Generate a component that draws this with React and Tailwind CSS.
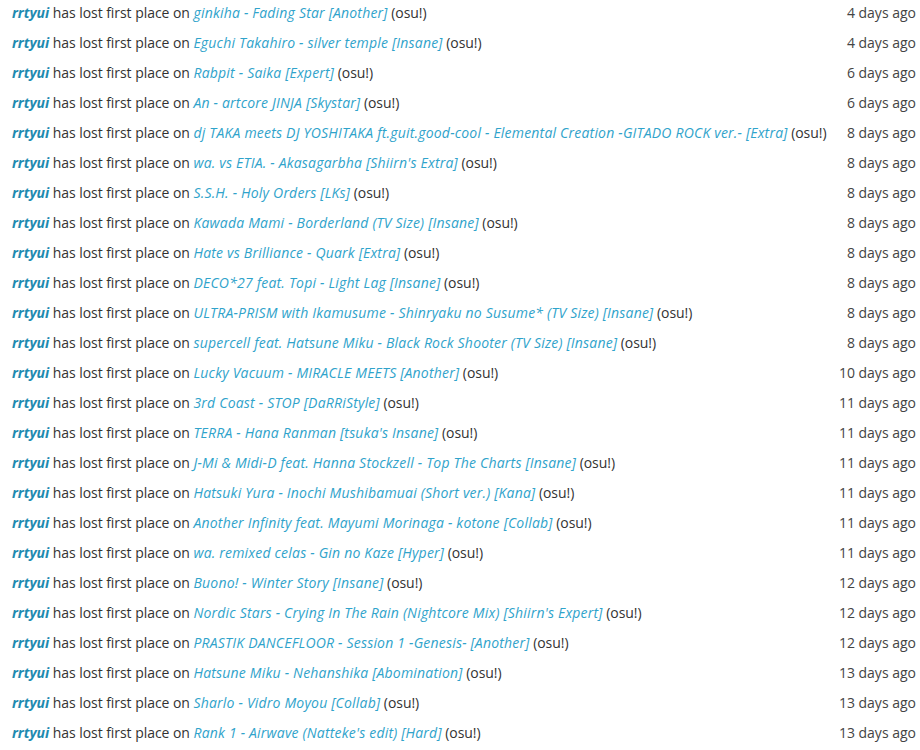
import React from "react";

const rows = [
  ["ginkiha - Fading Star [Another]", "4 days ago"],
  ["Eguchi Takahiro - silver temple [Insane]", "4 days ago"],
  ["Rabpit - Saika [Expert]", "6 days ago"],
  ["An - artcore JINJA [Skystar]", "6 days ago"],
  ["dj TAKA meets DJ YOSHITAKA ft.guit.good-cool - Elemental Creation -GITADO ROCK ver.- [Extra]", "8 days ago"],
  ["wa. vs ETIA. - Akasagarbha [Shiirn's Extra]", "8 days ago"],
  ["S.S.H. - Holy Orders [LKs]", "8 days ago"],
  ["Kawada Mami - Borderland (TV Size) [Insane]", "8 days ago"],
  ["Hate vs Brilliance - Quark [Extra]", "8 days ago"],
  ["DECO*27 feat. Topi - Light Lag [Insane]", "8 days ago"],
  ["ULTRA-PRISM with Ikamusume - Shinryaku no Susume* (TV Size) [Insane]", "8 days ago"],
  ["supercell feat. Hatsune Miku - Black Rock Shooter (TV Size) [Insane]", "8 days ago"],
  ["Lucky Vacuum - MIRACLE MEETS [Another]", "10 days ago"],
  ["3rd Coast - STOP [DaRRiStyle]", "11 days ago"],
  ["TERRA - Hana Ranman [tsuka's Insane]", "11 days ago"],
  ["J-Mi & Midi-D feat. Hanna Stockzell - Top The Charts [Insane]", "11 days ago"],
  ["Hatsuki Yura - Inochi Mushibamuai (Short ver.) [Kana]", "11 days ago"],
  ["Another Infinity feat. Mayumi Morinaga - kotone [Collab]", "11 days ago"],
  ["wa. remixed celas - Gin no Kaze [Hyper]", "11 days ago"],
  ["Buono! - Winter Story [Insane]", "12 days ago"],
  ["Nordic Stars - Crying In The Rain (Nightcore Mix) [Shiirn's Expert]", "12 days ago"],
  ["PRASTIK DANCEFLOOR - Session 1 -Genesis- [Another]", "12 days ago"],
  ["Hatsune Miku - Nehanshika [Abomination]", "13 days ago"],
  ["Sharlo - Vidro Moyou [Collab]", "13 days ago"],
  ["Rank 1 - Airwave (Natteke's edit) [Hard]", "13 days ago"],
];

export default function App() {
  return (
    <div
      className="w-[920px] h-[750px] overflow-hidden bg-white text-[14px] text-[#333]"
      style={{ fontFamily: '"Open Sans", sans-serif' }}
    >
      <div className="-mt-[3px] flex flex-col pl-[12px] pr-[4px]">
        {rows.map(([map, time], i) => (
          <div key={i} className="flex h-[30px] items-center justify-between whitespace-nowrap">
            <div className="tracking-[-0.05px]">
              <span className="font-bold italic text-[#1e8ab0]">rrtyui</span>{" "}
              has lost first place on{" "}
              <span className="italic tracking-[0.2px] text-[#2fa3cb]">{map}</span>{" "}
              (osu!)
            </div>
            <div className="text-[#444]">{time}</div>
          </div>
        ))}
      </div>
    </div>
  );
}
